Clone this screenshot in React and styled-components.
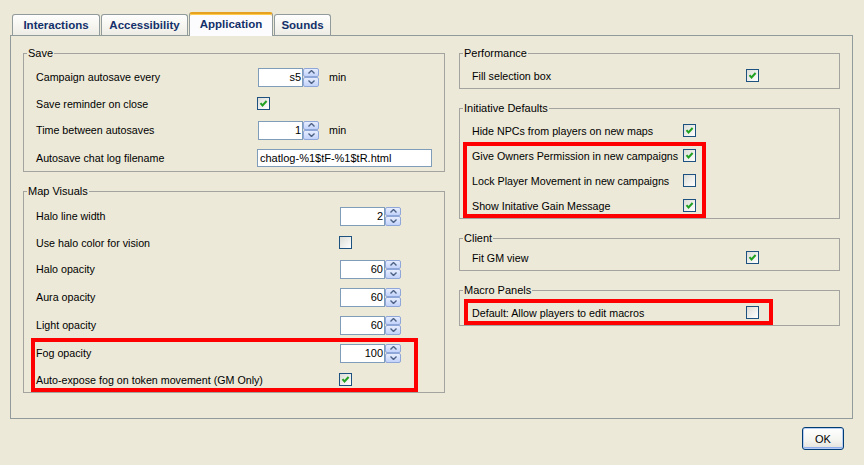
import React from 'react';
import styled, { createGlobalStyle } from 'styled-components';

const GlobalStyle = createGlobalStyle`
  html, body {
    margin: 0;
    padding: 0;
    background: #ECE9D8;
    font-family: "Liberation Sans", Arial, sans-serif;
    font-size: 10.7px;
    color: #000;
  }
`;

const Window = styled.div`
  width: 864px;
  height: 465px;
  padding-top: 12px;
  box-sizing: border-box;
  overflow: hidden;
`;

const TabBar = styled.div`
  display: flex;
  align-items: flex-end;
  gap: 1px;
  height: 23px;
  margin-left: 12px;
`;

const Tab = styled.div`
  position: relative;
  z-index: ${p => (p.$active ? 1 : 0)};
  width: ${p => p.$w}px;
  height: ${p => (p.$active ? 24 : 21)}px;
  margin-bottom: ${p => (p.$active ? -1 : 0)}px;
  box-sizing: border-box;
  display: flex;
  align-items: center;
  justify-content: center;
  padding-bottom: ${p => (p.$active ? 2 : 0)}px;
  border: 1px solid #919B9C;
  border-bottom: none;
  border-top: ${p => (p.$active ? '2px solid #E6A21F' : '1px solid #919B9C')};
  border-radius: 3px 3px 0 0;
  background: ${p => (p.$active ? '#FCFCFE' : 'linear-gradient(#FEFEFE, #F3F2EC 70%, #ECEBE4)')};
  box-shadow: ${p => (p.$active ? 'inset 0 1px 0 #FFCB4C' : 'none')};
  font-weight: bold;
  font-size: 11.5px;
  color: #13306A;
`;

const Panel = styled.div`
  margin-left: 10px;
  width: 843px;
  height: 384px;
  box-sizing: border-box;
  border: 1px solid #919B9C;
  padding: 17px 12px 0 12px;
`;

const Columns = styled.div`
  display: grid;
  grid-template-columns: 422px 381px;
  column-gap: 14px;
  align-items: start;
`;

const Column = styled.div`
  display: flex;
  flex-direction: column;
  gap: 19px;
`;

const Group = styled.div`
  position: relative;
  --lw: ${p => p.$lw}px;
  border: 1px solid #A3A3A0;
  padding: ${p => p.$pt}px 0 0 12px;
`;

const Legend = styled.span`
  position: absolute;
  top: -7px;
  left: 3px;
  padding: 0 1px;
  line-height: 13px;
  font-size: 11px;
  background: #ECE9D8;
`;

const Row = styled.div`
  display: grid;
  grid-template-columns: var(--lw) auto auto;
  justify-content: start;
  align-items: center;
  height: ${p => p.$h}px;
  white-space: nowrap;
`;

const Highlight = styled.div`
  margin: -1px 0 0 -${p => p.$dx}px;
  padding: 1px 0 0 ${p => p.$dx}px;
  width: ${p => p.$w}px;
  box-sizing: border-box;
  outline: 4px solid #FF0000;
  outline-offset: -4px;
`;

const Spinner = styled.div`
  display: flex;
  margin-left: 1px;
  height: 19px;
`;

const SpinField = styled.div`
  width: 45px;
  box-sizing: border-box;
  border: 1px solid #7F9DB9;
  background: #fff;
  text-align: right;
  padding-right: 1px;
  line-height: 17px;
  font-size: 11px;
`;

const SpinButtons = styled.div`
  display: flex;
  flex-direction: column;
  width: 16px;
`;

const SpinButton = styled.div`
  flex: 1;
  display: flex;
  align-items: center;
  justify-content: center;
  box-sizing: border-box;
  border: 1px solid #8FA6D8;
  border-radius: 2px;
  background: linear-gradient(#E6EDFE, #C2D2FA);
`;

const Unit = styled.span`
  margin-left: 10px;
`;

const TextField = styled.div`
  width: 175px;
  height: 18px;
  box-sizing: border-box;
  border: 1px solid #7F9DB9;
  background: #fff;
  padding-left: 2px;
  line-height: 16px;
  font-size: 11px;
  white-space: nowrap;
`;

const CheckBox = styled.div`
  width: 13px;
  height: 13px;
  box-sizing: border-box;
  border: 1px solid #1C5180;
  background: linear-gradient(135deg, #DCDCD7, #FFFFFF);
  display: flex;
  align-items: center;
  justify-content: center;
`;

const Footer = styled.div`
  display: flex;
  justify-content: flex-end;
  padding-right: 20px;
  margin-top: 8px;
`;

const OkButton = styled.div`
  width: 42px;
  height: 23px;
  box-sizing: border-box;
  border: 1px solid #003C74;
  border-radius: 3px;
  background: linear-gradient(#FFFFFF, #F3F3EF 60%, #E3E1DA);
  box-shadow: inset 0 0 0 1px #B7CCF3, inset 0 -2px 0 #8FAEEB;
  display: flex;
  align-items: center;
  justify-content: center;
  font-size: 11px;
`;

const Arrow = ({ down }) => (
  <svg width="7" height="4" viewBox="0 0 7 4">
    <polyline
      points={down ? '0.5,0.5 3.5,3.5 6.5,0.5' : '0.5,3.5 3.5,0.5 6.5,3.5'}
      fill="none"
      stroke="#4D6185"
      strokeWidth="1.4"
    />
  </svg>
);

const Spin = ({ value, unit }) => (
  <>
    <Spinner>
      <SpinField>{value}</SpinField>
      <SpinButtons>
        <SpinButton><Arrow /></SpinButton>
        <SpinButton><Arrow down /></SpinButton>
      </SpinButtons>
    </Spinner>
    {unit && <Unit>{unit}</Unit>}
  </>
);

const Check = ({ on }) => (
  <CheckBox>
    {on && (
      <svg width="9" height="9" viewBox="0 0 9 9">
        <polyline points="1.5,4.2 3.5,6.4 7.6,2" fill="none" stroke="#21A121" strokeWidth="2" />
      </svg>
    )}
  </CheckBox>
);

const SpinRow = ({ label, value, unit }) => (
  <Row $h={28}>
    <span>{label}</span>
    <Spin value={value} unit={unit} />
  </Row>
);

const CheckRow = ({ label, on }) => (
  <Row $h={25}>
    <span>{label}</span>
    <Check on={on} />
  </Row>
);

const tabs = [
  { title: 'Interactions', w: 88 },
  { title: 'Accessibility', w: 87 },
  { title: 'Application', w: 84, active: true },
  { title: 'Sounds', w: 57 },
];

export default function App() {
  return (
    <Window>
      <GlobalStyle />
      <TabBar>
        {tabs.map(t => (
          <Tab key={t.title} $w={t.w} $active={t.active}>{t.title}</Tab>
        ))}
      </TabBar>
      <Panel>
        <Columns>
          <Column>
            <Group $lw={221} $pt={9}>
              <Legend>Save</Legend>
              <SpinRow label="Campaign autosave every" value="s5" unit="min" />
              <CheckRow label="Save reminder on close" on />
              <SpinRow label="Time between autosaves" value="1" unit="min" />
              <Row $h={27}>
                <span>Autosave chat log filename</span>
                <TextField>chatlog-%1$tF-%1$tR.html</TextField>
              </Row>
            </Group>
            <Group $lw={303} $pt={10}>
              <Legend>Map Visuals</Legend>
              <SpinRow label="Halo line width" value="2" />
              <CheckRow label="Use halo color for vision" />
              <SpinRow label="Halo opacity" value="60" />
              <SpinRow label="Aura opacity" value="60" />
              <SpinRow label="Light opacity" value="60" />
              <Highlight $dx={5} $w={387}>
                <SpinRow label="Fog opacity" value="100" />
                <CheckRow label="Auto-expose fog on token movement (GM Only)" on />
              </Highlight>
            </Group>
          </Column>
          <Column>
            <Group $lw={274} $pt={9}>
              <Legend>Performance</Legend>
              <CheckRow label="Fill selection box" on />
            </Group>
            <Group $lw={211} $pt={9}>
              <Legend>Initiative Defaults</Legend>
              <CheckRow label="Hide NPCs from players on new maps" on />
              <Highlight $dx={9} $w={243}>
                <CheckRow label="Give Owners Permission in new campaigns" on />
                <CheckRow label="Lock Player Movement in new campaigns" />
                <CheckRow label="Show Initative Gain Message" on />
              </Highlight>
            </Group>
            <Group $lw={274} $pt={6}>
              <Legend>Client</Legend>
              <CheckRow label="Fit GM view" on />
            </Group>
            <Group $lw={274} $pt={9}>
              <Legend>Macro Panels</Legend>
              <Highlight $dx={8} $w={309}>
                <CheckRow label="Default: Allow players to edit macros" />
              </Highlight>
            </Group>
          </Column>
        </Columns>
      </Panel>
      <Footer>
        <OkButton>OK</OkButton>
      </Footer>
    </Window>
  );
}
